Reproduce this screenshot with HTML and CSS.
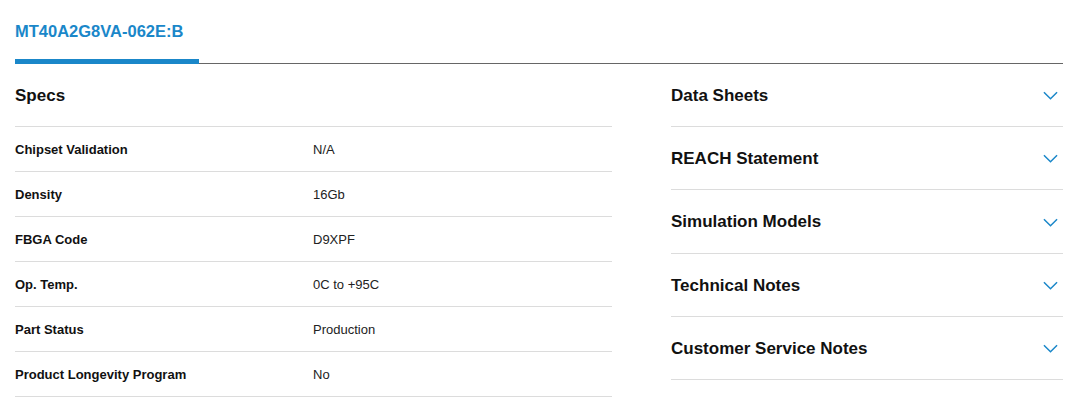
FILE: index.html
```html
<!DOCTYPE html>
<html>
<head>
<meta charset="utf-8">
<link rel="stylesheet" href="styles.css">
</head>
<body>
<div class="page">
  <div class="tabs">
    <div class="tab">MT40A2G8VA-062E:B</div>
  </div>
  <div class="content">
    <div class="specs">
      <div class="specs-head">Specs</div>
      <div class="row"><div class="label">Chipset Validation</div><div class="value">N/A</div></div>
      <div class="row"><div class="label">Density</div><div class="value">16Gb</div></div>
      <div class="row"><div class="label">FBGA Code</div><div class="value">D9XPF</div></div>
      <div class="row"><div class="label">Op. Temp.</div><div class="value">0C to +95C</div></div>
      <div class="row"><div class="label">Part Status</div><div class="value">Production</div></div>
      <div class="row"><div class="label">Product Longevity Program</div><div class="value">No</div></div>
    </div>
    <div class="accordion">
      <div class="acc-item"><span>Data Sheets</span><svg class="chev" viewBox="0 0 16 9"><path d="M1 1l7 7 7-7"/></svg></div>
      <div class="acc-item"><span>REACH Statement</span><svg class="chev" viewBox="0 0 16 9"><path d="M1 1l7 7 7-7"/></svg></div>
      <div class="acc-item acc-tall"><span>Simulation Models</span><svg class="chev" viewBox="0 0 16 9"><path d="M1 1l7 7 7-7"/></svg></div>
      <div class="acc-item"><span>Technical Notes</span><svg class="chev" viewBox="0 0 16 9"><path d="M1 1l7 7 7-7"/></svg></div>
      <div class="acc-item"><span>Customer Service Notes</span><svg class="chev" viewBox="0 0 16 9"><path d="M1 1l7 7 7-7"/></svg></div>
    </div>
  </div>
</div>
</body>
</html>
```
FILE: styles.css
```css
* { box-sizing: border-box; }
body {
  margin: 0;
  font-family: "Liberation Sans", Arial, sans-serif;
  color: #111;
  background: #fff;
}
.page {
  padding: 0 22px 0 15px;
}
.tabs {
  display: flex;
  border-bottom: 1px solid #666;
  height: 64px;
}
.tab {
  width: 184px;
  height: 64px;
  margin-bottom: -1px;
  padding-top: 21px;
  line-height: 20px;
  font-size: 16.5px;
  font-weight: bold;
  color: #1a87c9;
  border-bottom: 5px solid #1a87c9;
}
.content {
  display: grid;
  grid-template-columns: 597px 1fr;
  column-gap: 59px;
}
.specs-head {
  height: 63px;
  display: flex;
  align-items: center;
  font-size: 17px;
  font-weight: bold;
  border-bottom: 1px solid #dcdcdc;
  padding-top: 1px;
}
.row {
  height: 45px;
  display: flex;
  align-items: center;
  border-bottom: 1px solid #dcdcdc;
  font-size: 13px;
  padding-top: 1px;
}
.label {
  width: 298px;
  font-weight: bold;
}
.value {
  color: #222;
}
.acc-item {
  height: 63px;
  display: flex;
  align-items: center;
  justify-content: space-between;
  border-bottom: 1px solid #dcdcdc;
  font-size: 17px;
  font-weight: bold;
  padding-top: 1px;
}
.acc-tall {
  height: 64px;
}
.chev {
  width: 15px;
  height: 9px;
  margin-right: 5px;
  fill: none;
  stroke: #1a87c9;
  stroke-width: 1.6;
}
```
